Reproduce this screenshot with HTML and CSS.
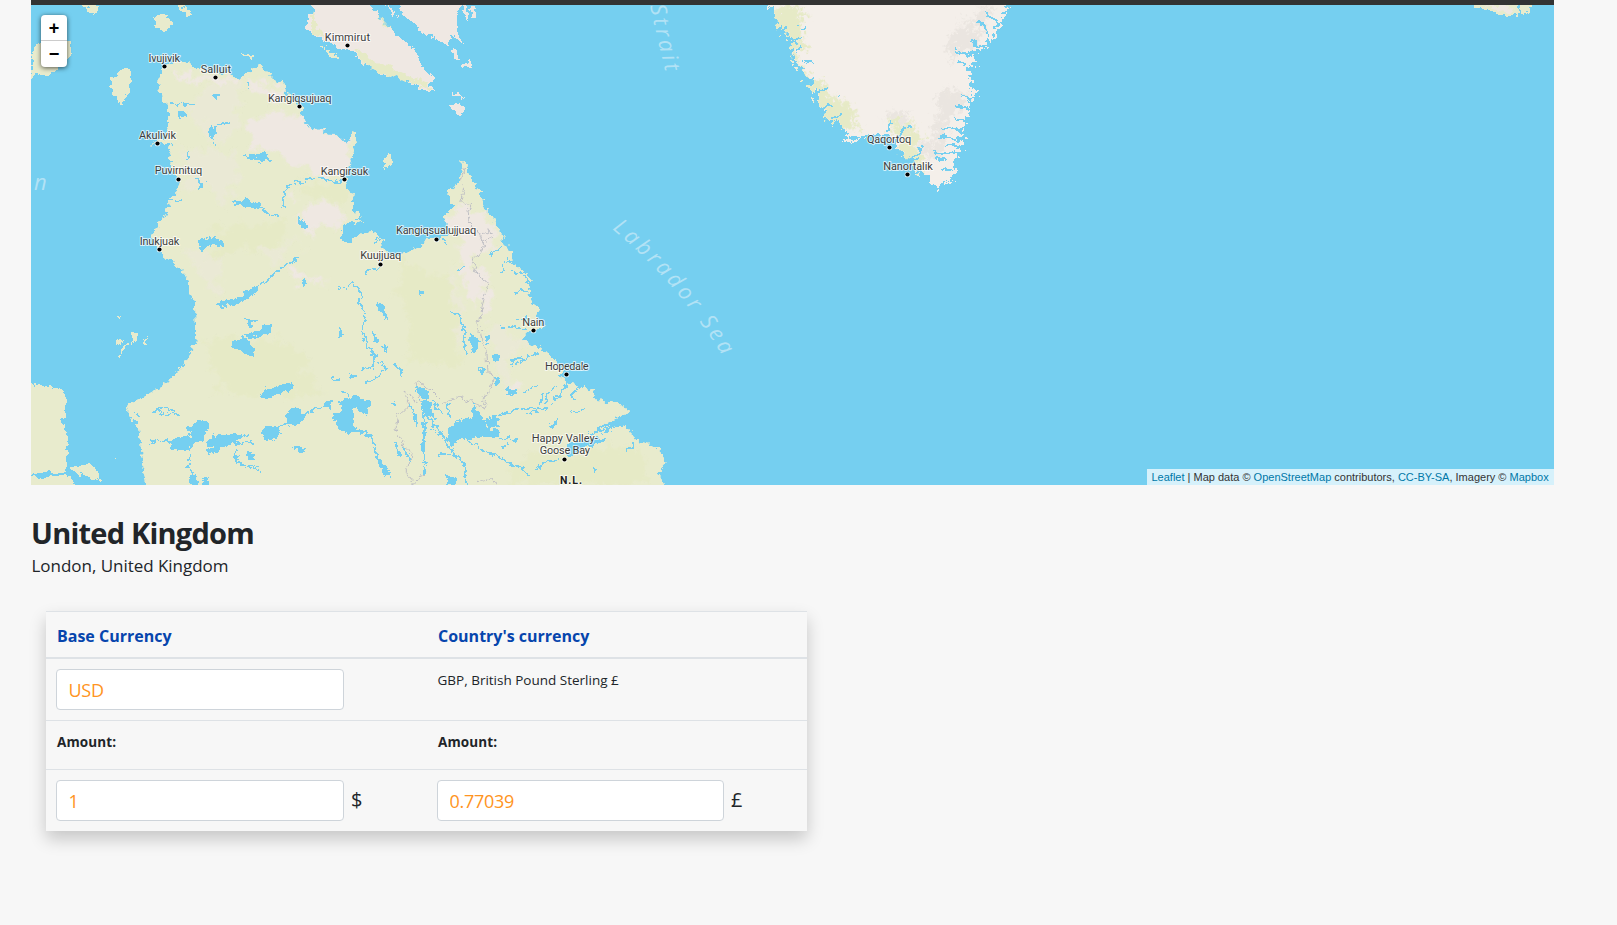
FILE: index.html
```html
<!DOCTYPE html>
<html lang="en">
<head>
<meta charset="utf-8">
<title>United Kingdom</title>
<link rel="stylesheet" href="styles.css">
</head>
<body>
<div class="topbar"></div>
<main class="page">
<section class="map">
<svg class="map-canvas" viewBox="31 5 1523 480" width="1523" height="480">
<defs>
<filter id="coast" x="31" y="5" width="1523" height="480" filterUnits="userSpaceOnUse"><feTurbulence type="fractalNoise" baseFrequency="0.16" numOctaves="3" seed="4"/><feDisplacementMap in="SourceGraphic" scale="9" xChannelSelector="R" yChannelSelector="G"/></filter>
<filter id="fjord" x="31" y="5" width="1523" height="480" filterUnits="userSpaceOnUse"><feTurbulence type="fractalNoise" baseFrequency="0.2" numOctaves="3" seed="9"/><feDisplacementMap in="SourceGraphic" scale="19" xChannelSelector="R" yChannelSelector="G"/></filter>
<filter id="soft" x="31" y="5" width="1523" height="480" filterUnits="userSpaceOnUse"><feTurbulence type="fractalNoise" baseFrequency="0.06" numOctaves="3" seed="2"/><feDisplacementMap in="SourceGraphic" scale="34" xChannelSelector="R" yChannelSelector="G"/><feGaussianBlur stdDeviation="1"/></filter>
<path id="mainland" d="M160 70 163 66 175 61 190 63 200 69 215 72 230 74 240 80 248 72 260 64 267 72 276 81 284 82 286 93 296 103 305 108 301 114 307 126 320 130 338 134 347 144 353 133 356 134 357 142 352 150 350 165 345 178 346 190 354 193 352 205 352 212 360 213 362 222 355 225 348 238 358 234 376 231 382 240 383 248 391 255 403 253 417 248 430 238 437 240 450 230 443 217 455 205 447 197 448 191 457 185 462 167 461 160 468 164 467 170 473 180 478 190 484 200 485 210 493 217 497 227 505 238 503 243 512 252 513 265 527 273 532 280 528 290 533 303 540 307 537 317 545 327 527 332 523 340 538 347 553 357 563 368 560 377 567 383 577 385 593 390 597 400 617 403 631 410 620 417 597 428 608 428 628 426 635 440 652 444 663 453 667 463 658 473 665 485V492H146L146 485 142 460 138 427 130 417 125 405 143 397 168 382 183 365 193 350 196 337 195 307 188 280 177 265 163 255 158 249 155 245 152 233 163 217 170 207 167 200 177 193 180 180 170 170 173 160 167 152 173 143 158 143 148 147 158 141 167 133 168 117 168 105 162 100 159 83Z"/>
<path id="greenland" d="M767 -2V5L775 13 777 23 782 33 790 35 793 50 795 63 803 72 810 82 815 97 822 110 827 122 838 122 847 132 842 145 853 138 865 137 883 133 897 143 902 157 917 158 917 173 930 177 937 189 950 182 955 173 953 160 962 150 962 133 968 115 970 103 977 90 968 87 973 77 963 67 977 62 970 55 980 50 992 38 1000 23 1008 8V-2Z"/>
<path id="baffin" d="M308 0 315 12 306 20 308 30 317 37 330 42 337 48 353 50 360 62 373 68 380 75 397 77 410 83 425 90 435 92 430 85 435 77 423 68 420 58 408 43 393 32 383 22 368 0ZM398 0 403 15 415 22 418 32 427 35 435 38 447 45 452 35 463 43 457 30 457 15 463 0ZM388 3 397 17 391 13 386 3ZM464 3 468 12 466 24 463 14ZM472 3 476 12 474 20 470 10ZM452 50 457 48 460 58 453 58ZM460 64 472 62 469 67 461 68ZM453 92 463 98 460 101ZM448 106 455 103 465 107 461 117 456 111Z"/>
<path id="isles" d="M31 60 36 46 50 40 73 41 70 57 62 62 58 69 47 77 40 73 31 78ZM75 0H103L94 14ZM122 68 130 68 132 80 127 92 121 107 111 92 112 78ZM151 17 157 14 168 17 172 24 165 32 155 24ZM177 3 187 7 193 15 188 17 182 11ZM240 52 246 54 253 55 252 57 243 56ZM326 51 335 52 339 60 330 59ZM318 44 326 48 325 50ZM382 171 383 157 391 155 393 163ZM20 385 50 386 64 390 66 400 62 420 68 440 65 472 20 476ZM20 478 70 475 77 492H20ZM70 467 88 463 97 469 101 481 90 478 72 472ZM134 331 138 336 132 345 131 339ZM145 337 147 339 145 347 143 345ZM116 343 122 339 124 341 118 345ZM118 357 122 348 128 343 124 350 120 358ZM119 317 121 317 120 320ZM115 456 118 458 116 461ZM1470 3 1477 9 1490 10 1502 16 1518 16 1520 12 1515 3ZM1519 3H1532L1529 12 1523 14 1521 9Z"/>
<clipPath id="mainClip"><use href="#mainland"/></clipPath><clipPath id="greenClip"><use href="#greenland"/></clipPath>
<path id="straitLine" d="M650 6 Q657 38 666 74"/>
<path id="seaLine" d="M612 229 Q676 281 724 358"/>
</defs>
<rect class="water" x="31" y="5" width="1523" height="480"/>
<g class="land" filter="url(#coast)" shape-rendering="crispEdges">
<g clip-path="url(#mainClip)"><use href="#mainland"/></g>
<use href="#isles"/>
</g>
<g filter="url(#coast)">
<g clip-path="url(#mainClip)">
<g class="rock" filter="url(#soft)"><path d="M168 68 240 76 230 85 175 78ZM245 80 280 84 285 95 250 96ZM255 118 290 112 350 140 345 170 320 176 290 160 245 150ZM298 202 338 208 336 230 300 225ZM450 210 485 210 500 240 475 260 488 290 480 318 465 280 452 235ZM290 272 322 278 310 283 292 279ZM508 380 522 385 520 396 510 393Z"/></g>
<g class="tint" filter="url(#soft)"><path d="M185 100 240 80 240 130 210 140ZM180 150 240 150 230 200 185 190ZM240 240 300 245 270 260ZM180 250 230 255 210 290ZM455 260 465 350 440 330ZM490 320 520 340 510 380 490 360Z"/></g>
<g class="green" filter="url(#soft)"><path d="M210 230 290 220 285 235 220 260ZM298 182 350 184 345 205 320 200ZM205 340 290 340 320 395 220 390ZM400 260 450 275 460 370 410 360ZM515 460 640 445 650 485 510 485Z"/></g>
</g>
</g>
<g filter="url(#fjord)" shape-rendering="crispEdges"><use href="#greenland" class="ice"/></g>
<g filter="url(#fjord)"><g clip-path="url(#greenClip)">
<g class="green" filter="url(#soft)"><path d="M775 8 805 8 808 28 795 58 820 80 850 108 855 130 835 130 800 75 780 40ZM888 115 912 122 925 155 922 180 900 155Z"/></g>
<g class="shade" filter="url(#soft)"><path d="M975 10 995 8 975 40 960 55 950 70 945 50ZM948 85 965 95 945 130 930 160 925 150 940 110ZM890 112 905 112 905 120 885 122Z"/></g>
</g></g>
<g filter="url(#coast)" shape-rendering="crispEdges"><use href="#baffin" class="rocky"/></g>
<g filter="url(#coast)"><path class="green" d="M354 48 362 52 375 62 400 72 428 84 431 90 410 82 380 74 360 61ZM312 12 318 28 325 38 312 34ZM372 8 392 31 386 26Z"/><path class="rock" d="M1486 5 1505 5 1516 10 1508 14 1496 10Z"/></g>
<g class="border" filter="url(#coast)"><path d="M465 167 460 180 464 187 461 200 465 205 472 203 468 210 469 222 480 233 483 247 475 258 472 263 480 277 488 283 483 303 479 325 482 340 487 353 488 373 495 378 488 393 483 400 487 408 473 403 460 397 443 403 430 390 417 380 420 403 403 390 410 405 397 417 395 430 405 447 413 457 405 470 413 483 427 473 M477 482 491 478 495 485 M479 236 490 231 493 238 482 243"/></g>
<g class="lakes" filter="url(#coast)" shape-rendering="crispEdges">
<path class="lake" d="M242 155 251 156 262 153 269 160 262 161 253 158ZM236 203 247 200 259 204 258 208 247 207ZM210 126 215 127 213 141 210 138ZM214 95 219 95 216 98ZM180 112 184 115 180 117ZM197 180 204 183 200 187ZM298 218 302 219 307 228 301 227ZM346 224 352 223 357 234 348 243 341 236ZM201 239 210 238 222 241 222 245 209 244 202 250 198 246ZM217 304 229 300 238 299 248 290 258 287 253 295 240 302 226 306ZM234 341 243 337 250 344 254 349 252 355 245 354 240 348 233 347ZM247 335 258 332 263 326 271 326 270 332 259 336 250 338ZM246 321 255 322 249 325ZM303 280 308 283 304 284ZM261 395 268 389 293 384 292 389 273 395 264 398ZM170 442 184 438 193 434 186 429 200 422 208 425 204 435 194 442 185 451 172 448ZM208 440 221 434 240 436 234 443 216 445 207 443ZM207 449 220 446 220 451 209 455ZM262 432 272 426 279 432 273 440 265 437ZM286 416 293 410 304 414 304 421 295 425 288 421ZM325 402 330 402 330 408 324 406ZM333 417 344 410 339 403 353 397 370 402 366 416 356 407 351 409 354 430 349 435 337 424ZM448 428 463 420 472 417 474 405 481 417 487 430 498 431 497 437 482 436 460 438 452 445 448 438ZM485 420 498 415 498 426 490 428ZM417 388 428 392 427 399 419 395ZM421 401 431 405 435 419 424 412ZM471 334 479 340 477 350 472 349ZM487 335 490 339 488 342ZM493 356 500 356 497 360 493 359ZM480 369 485 371 483 375ZM495 378 500 380 498 385ZM507 390 515 391 510 395ZM419 290 424 291 422 295ZM377 300 380 303 388 319 384 317ZM373 335 379 339 377 343ZM384 342 386 350 383 349ZM395 363 400 368 403 376 398 369ZM570 444 582 440 606 439 596 444 578 449 568 458ZM550 426 558 420 554 428ZM341 331 343 335 340 335ZM334 378 341 381 335 381ZM351 374 356 377 352 380ZM295 448 305 449 299 451ZM249 454 254 457 249 458ZM190 476 195 477 198 485 192 485ZM204 478 208 477 207 485 202 485ZM447 475 457 481 455 485 448 485ZM380 462 389 475 384 473ZM594 466 597 470 595 472Z"/>
<path class="river" d="M229 123 217 125 212 132M172 103 184 105 194 104M188 150 188 160M166 200 183 201M283 210 283 196 289 183 300 182 309 178 326 179 335 182 344 181M259 208 265 212 271 215 279 217M246 82 247 89M258 287 270 279 277 270 298 259M337 285 345 288 354 283 361 293 360 303 367 313 362 331 366 345 375 356 373 367 362 369M380 361 387 369 378 375 364 385M363 274 380 267M154 411 168 414 179 413M150 442 170 441M190 455 188 467 194 477M236 448 236 462 249 467 261 470M208 445 230 443 255 442M234 440 247 434M304 415 318 409 328 404M276 430 290 422M137 414 140 416M155 411 165 408 174 412M31 475 45 473 66 474M339 388 349 397M420 404 424 422 424 445 425 475M424 414 436 426 447 441M403 446 410 462M444 440 455 455 464 464 466 485M467 439 480 449 500 458 510 463 523 469 528 475M535 470 545 462 560 459M497 415 515 411 524 409 548 409M499 439 510 438M513 366 526 358 540 353M512 364 514 358 527 358M500 326 513 327 527 328M514 320 528 319M450 310 461 319 464 334 464 353M456 272 464 266M490 254 500 247M500 273 507 260 515 265M514 272 527 274M515 292 528 290M545 405 548 393 556 386M552 403 562 390 568 384M575 400 572 393 583 386M585 408 570 413M527 413 538 412M522 393 537 386M539 405 543 393M448 404 449 418M434 402 442 414M415 409 417 424M577 390 580 386M595 431 610 424 628 423M590 434 600 431 614 429M626 453 633 444M531 284 523 276M379 239 374 243M441 237 447 245M355 220 362 218M512 440 519 440M500 448 508 445M413 413 416 425M431 428 440 436M409 403 413 410M393 402 396 405M438 455 450 453M395 442 400 458"/>
<path class="inlet" d="M351 430 365 432 373 442 377 459 390 472M767 22 777 22 M775 32 785 28 M788 43 803 38 M800 27 807 27 M795 52 802 46 M803 61 815 62 M806 81 814 78 M812 95 826 89 M819 110 833 105 M831 118 842 115 M838 96 842 95 M887 133 892 122 M898 140 904 128 912 128 M915 158 922 145 M933 153 960 153 M945 145 963 148 M940 137 962 140 M942 128 967 130 M952 119 968 121 M955 106 969 109 M960 96 972 100 M955 50 970 56 980 50 M957 61 966 66 M971 42 987 48 M978 20 990 35 M985 12 1000 25 M941 170 952 170 M935 157 947 160"/>
</g>
<g class="sea">
<text><textPath href="#straitLine" textLength="68">Strait</textPath></text>
<text><textPath href="#seaLine" textLength="169">Labrador Sea</textPath></text>
<text x="34" y="190">n</text>
</g>
<g class="towns">
<text x="148.5" y="62" textLength="31.5">Ivujivik</text><text x="200.7" y="72.5" textLength="30.5">Salluit</text><text x="268" y="101.5" textLength="63.5">Kangiqsujuaq</text><text x="139" y="139" textLength="37">Akulivik</text><text x="154.7" y="174.3" textLength="47.6">Puvirnituq</text><text x="320.7" y="175" textLength="47.6">Kangirsuk</text><text x="139.7" y="245" textLength="39.6">Inukjuak</text><text x="324.7" y="40.5" textLength="45.3">Kimmirut</text><text x="396" y="234" textLength="80.3">Kangiqsualujjuaq</text><text x="360.3" y="259.3" textLength="41">Kuujjuaq</text><text x="522.3" y="325.7" textLength="22">Nain</text><text x="545" y="370" textLength="43.7">Hopedale</text><text x="531.7" y="441.5" textLength="66">Happy Valley-</text><text x="539.7" y="454" textLength="50.3">Goose Bay</text><text x="867" y="142.5" textLength="44.3">Qaqortoq</text><text x="883.3" y="170" textLength="49.5">Nanortalik</text><text class="province" x="560" y="483.5" textLength="22">N.L.</text>
</g>
<g class="dots"><circle cx="164.5" cy="66.5" r="2.1"/><circle cx="215.5" cy="77.5" r="2.1"/><circle cx="299.5" cy="106.5" r="2.1"/><circle cx="157.5" cy="143.5" r="2.1"/><circle cx="178.5" cy="179.5" r="2.1"/><circle cx="344.5" cy="179.5" r="2.1"/><circle cx="159.5" cy="249.5" r="2.1"/><circle cx="347.5" cy="45.5" r="2.1"/><circle cx="436.5" cy="239.5" r="2.1"/><circle cx="380.5" cy="264.5" r="2.1"/><circle cx="533.5" cy="330.5" r="2.1"/><circle cx="566.5" cy="374.5" r="2.1"/><circle cx="564.5" cy="459.5" r="2.1"/><circle cx="889.5" cy="147.5" r="2.1"/><circle cx="907.5" cy="174.5" r="2.1"/></g>
</svg>
<div class="zoom"><a class="zoom-btn zoom-in">+</a><a class="zoom-btn">−</a></div>
<div class="attribution"><a>Leaflet</a> | Map data © <a>OpenStreetMap</a> contributors, <a>CC-BY-SA</a>, Imagery © <a>Mapbox</a></div>
</section>
<h1 class="country">United Kingdom</h1>
<p class="capital">London, United Kingdom</p>
<section class="currency">
<div class="row head"><div class="cell">Base Currency</div><div class="cell">Country's currency</div></div>
<div class="row names"><div class="cell"><input class="field" value="USD"></div><div class="cell"><span class="desc">GBP, British Pound Sterling £</span></div></div>
<div class="row labels"><div class="cell">Amount:</div><div class="cell">Amount:</div></div>
<div class="row amounts"><div class="cell"><input class="field" value="1"><span class="sign">$</span></div><div class="cell"><input class="field field-narrow" value="0.77039"><span class="sign">£</span></div></div>
</section>
</main>
</body>
</html>
```
FILE: styles.css
```css
* { box-sizing: border-box; }
body { margin: 0; min-height: 100vh; background: #f7f7f7; color: #212529; font-family: "Open Sans", "Noto Sans", sans-serif; }
.topbar { height: 5px; width: 1523px; margin-left: 31px; background: #333; }
.page { padding: 0 0 60px 31px; }
.map { position: relative; width: 1523px; height: 480px; overflow: hidden; }
.map-canvas { display: block; }
.water { fill: #75cff0; }
.land { fill: #e8ebcd; }
.rock { fill: #efe8e2; }
.rocky { fill: #efe8e3; }
.tint { fill: #eae9d5; }
.green { fill: #e6eac6; }
.ice { fill: #f4efea; }
.shade { fill: #eae5e0; }
.border path { fill: none; stroke: #bfbfc4; stroke-width: 1; }
.lakes { fill: #75cff0; }
.lake { stroke: #75cff0; stroke-width: 1.8; }
.river { fill: none; stroke: #75cff0; stroke-width: 1.6; }
.inlet { fill: none; stroke: #75cff0; stroke-width: 2.3; }
.sea { fill: #b2e2f5; font: italic 400 22px "Open Sans", sans-serif; }
.towns { font: 400 11px Roboto, sans-serif; fill: #3c3c3c; stroke: rgba(255, 255, 255, .7); stroke-width: 2px; paint-order: stroke; stroke-linejoin: round; }
.towns .province { font-weight: 700; font-size: 10.5px; fill: #222; }
.dots { fill: #000; stroke: rgba(255, 255, 255, .75); stroke-width: 1.5px; paint-order: stroke; }
.zoom { position: absolute; left: 10px; top: 10px; width: 26px; border-radius: 4px; background: #fff; box-shadow: 0 1px 5px rgba(0, 0, 0, .65); }
.zoom-btn { display: block; height: 26px; font: bold 18px/26px "Liberation Sans", sans-serif; color: #000; text-align: center; }
.zoom-in { border-bottom: 1px solid #ccc; }
.attribution { position: absolute; right: 0; bottom: 0; width: 407px; height: 16px; padding-left: 4.5px; background: rgba(255, 255, 255, .7); color: #333; font: 11px/16px "Liberation Sans", sans-serif; white-space: nowrap; }
.attribution a { color: #0078a8; }
.country { margin: 29px 0 0; font-size: 29px; line-height: 38px; font-weight: 700; letter-spacing: -.78px; }
.capital { margin: 4px 0 0 .5px; font-size: 17px; line-height: 20px; font-weight: 500; letter-spacing: -.03px; }
.currency { width: 761px; margin: 35px 0 0 15px; background: #f7f7f7; box-shadow: 0 8px 16px rgba(0, 0, 0, .2); font-size: 13.5px; }
.row { display: grid; grid-template-columns: 381px 380px; border-top: 1px solid #dee2e6; }
.cell { padding: 10px 10px 0; display: flex; align-items: flex-start; }
.head { height: 48px; border-bottom: 2px solid #dee2e6; font-size: 16px; font-weight: 700; color: #0645ad; line-height: 28px; }
.head .cell, .labels .cell { padding-left: 11px; }
.names { height: 61px; border-top: 0; }
.labels { height: 49px; font-weight: 700; line-height: 22px; letter-spacing: .1px; }
.amounts { height: 62px; }
.field { width: 288px; height: 41px; border: 1px solid #ced4da; border-radius: 4px; background: #fff; color: #ff9422; font: 400 18px "Open Sans", sans-serif; letter-spacing: -.3px; padding: 1px 11.5px 0; outline: 0; }
.field-narrow { width: 287px; }
.desc { line-height: 22px; padding-left: .5px; }
.sign { margin-left: 7px; font-size: 20px; line-height: 40px; }
```
